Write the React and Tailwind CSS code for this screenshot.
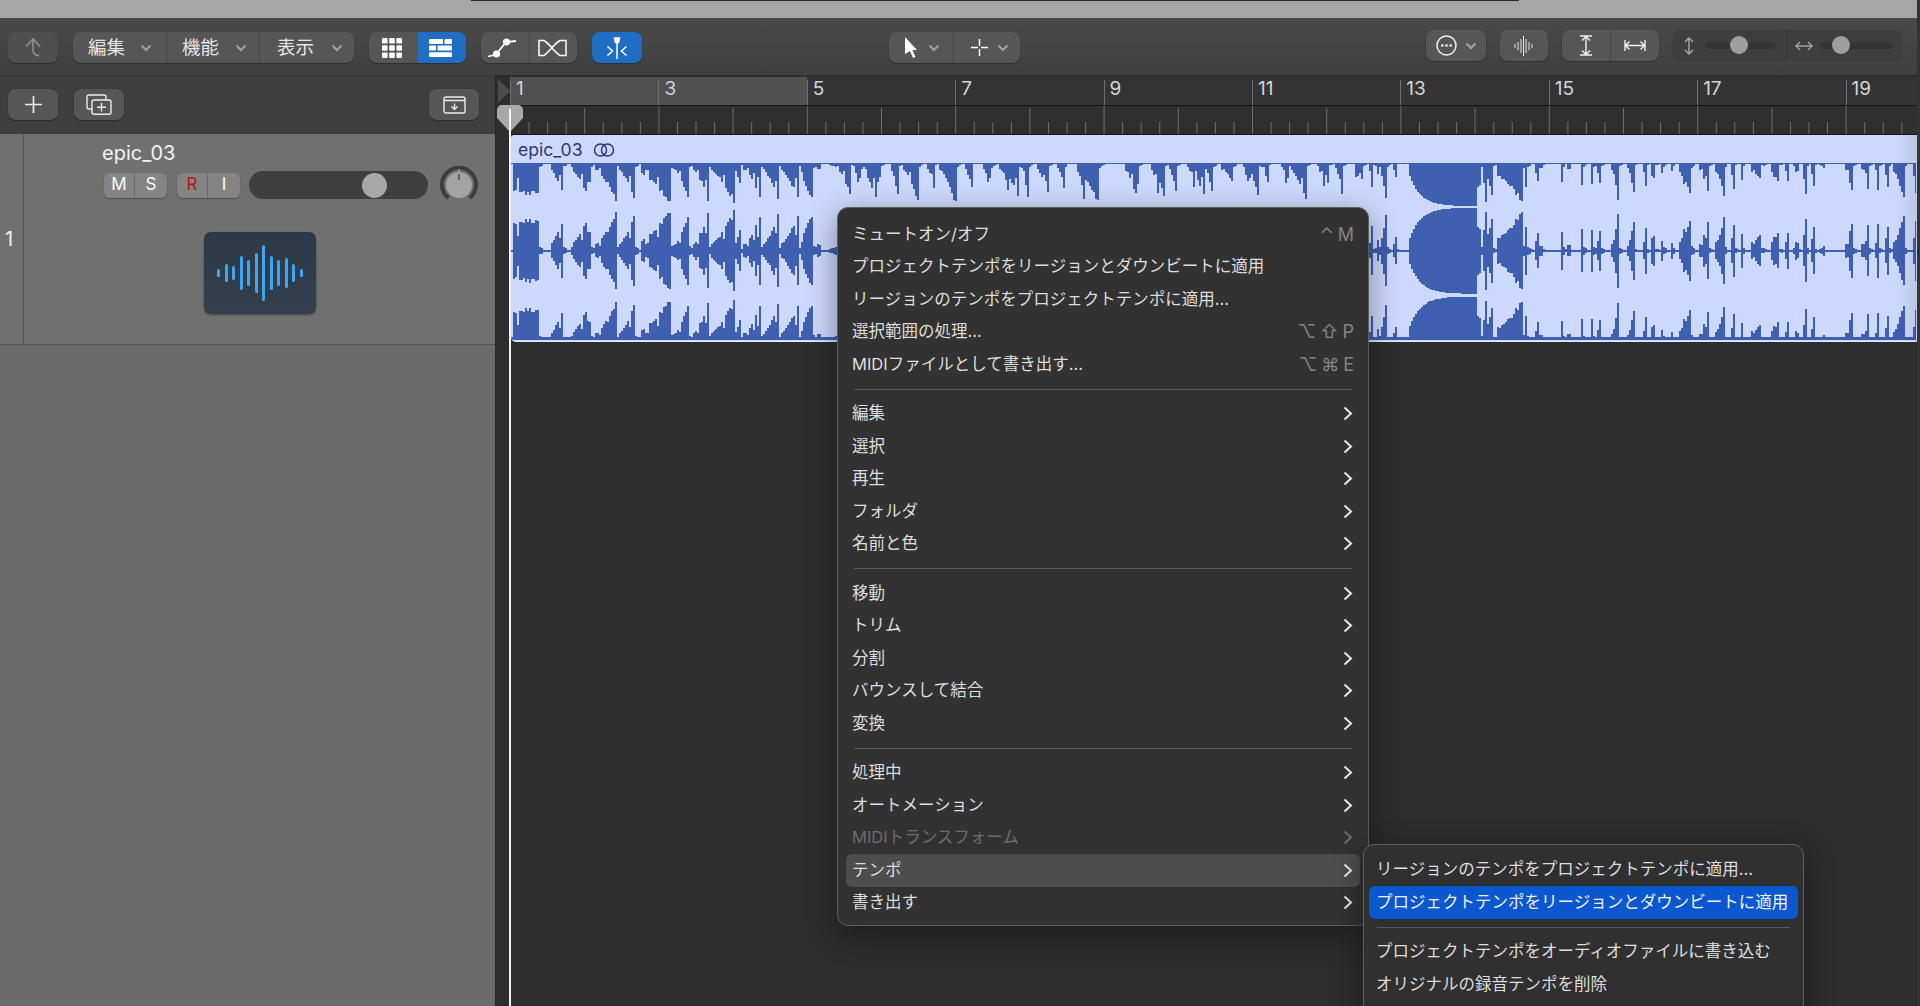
import React from "react";

let seed = 12345;
const rnd = () => {
  seed = (seed * 1103515245 + 12345) & 0x7fffffff;
  return seed / 0x7fffffff;
};

const hits = [
  [538, 32, 26, 0.9], [562, 30, 12, 0.4], [589, 36, 18, 0.35], [615, 36, 20, 0.3], [634, 36, 16, 0.3],
  [670, 40, 30, 0.45], [688, 38, 15, 0.25], [707, 35, 15, 0.3], [733, 38, 23, 0.3], [739, 20, 4, 0.7],
  [760, 35, 17, 0.3], [777, 35, 15, 0.3], [797, 35, 17, 0.3], [812, 40, 12, 0.6], [820, 12, 8, 0.1], [836, 5, 10, 0.3],
  [849, 33, 12, 0.3], [875, 35, 14, 0.3], [917, 38, 14, 0.3], [955, 40, 16, 0.3], [1018, 33, 20, 0.3], [1047, 30, 10, 0.4],
  [1098, 40, 22, 0.3], [1135, 32, 10, 0.4], [1163, 33, 12, 0.3], [1203, 33, 14, 0.3], [1232, 36, 12, 0.3], [1257, 30, 10, 0.3], [1304, 36, 14, 0.3],
  [1328, 28, 3, 0.7], [1341, 30, 4, 0.6], [1358, 33, 4, 0.6], [1372, 32, 3, 0.8], [1378, 32, 2, 0.8], [1385, 33, 5, 0.6], [1395, 15, 2, 0.8],
  [1479, 40, 3, 0.8], [1485, 40, 2, 0.8], [1492, 38, 5, 0.8], [1522, 40, 26, 0.5], [1526, 35, 2, 0.8],
  [1537, 20, 2, 0.8], [1542, 12, 3, 0.7], [1562, 30, 2, 0.6], [1570, 13, 4, 0.6], [1582, 32, 2, 0.7], [1592, 33, 2, 0.7], [1600, 25, 4, 0.5],
  [1617, 35, 6, 0.3], [1633, 30, 6, 0.3],
  [1645, 22, 2, 0.7], [1653, 28, 3, 0.6], [1662, 28, 2, 0.7], [1672, 24, 2, 0.8], [1683, 22, 5, 0.5], [1690, 38, 9, 0.4], [1707, 30, 8, 0.4],
  [1723, 33, 8, 0.4], [1733, 25, 2, 0.8], [1742, 27, 2, 0.8], [1760, 35, 10, 0.4], [1777, 33, 6, 0.5], [1787, 18, 2, 0.8], [1797, 14, 5, 0.6],
  [1805, 30, 2, 0.8], [1813, 22, 2, 0.8], [1823, 5, 5, 0.5], [1851, 30, 6, 0.4], [1867, 28, 6, 0.4], [1877, 28, 2, 0.8], [1887, 27, 2, 0.8], [1903, 35, 10, 0.4], [1915, 28, 2, 0.8],
];
for (let x = 860; x < 1366; x += 18.55) {
  if (x > 1100 && x < 1122) continue;
  hits.push([Math.round(x), 24 + rnd() * 13, 7, 0.3]);
}

const ampAt = (x) => {
  if (x >= 1408 && x < 1477) return 43 * (1 - Math.exp(-(x - 1405) / 11));
  let a = 0;
  for (const [end, peak, w, f] of hits) {
    if (x >= end - w && x <= end) {
      const t = Math.pow((x - (end - w)) / w, 1.4);
      const base = f >= 0.9 ? f : f * 0.6;
      a = Math.max(a, peak * (base + (1 - base) * t));
    } else if (x > end && x < end + 7) {
      a = Math.max(a, peak * 0.14 * (1 - (x - end) / 7));
    }
  }
  return a;
};

let wavePath = "";
for (let x = 511; x < 1916; x += 2) {
  const raw = ampAt(x);
  const solid = x >= 1408 && x < 1477;
  const dip = rnd() < 0.2 ? 0.55 : 1;
  const a = Math.max(1, solid ? raw : Math.min(42, raw * 1.08 * (0.82 + rnd() * 0.18) * dip));
  const px = x - 511;
  wavePath += `M${px} 0h2v${a.toFixed(1)}h-2z`;
  wavePath += `M${px} ${(87.7 - a).toFixed(1)}h2v${(2 * a).toFixed(1)}h-2z`;
  const b = Math.max(3, solid ? a + 0.5 : a);
  wavePath += `M${px} ${(177 - b).toFixed(1)}h2v${b.toFixed(1)}h-2z`;
}

let tickPath = "";
for (let i = 0; i <= 76; i++) {
  const x = i * 18.55 + 0.5;
  const kind = i % 8 === 0 ? 0 : i % 4 === 0 ? 1 : 2;
  const top = kind === 0 ? 0 : kind === 1 ? 2 : 16;
  tickPath += `M${x.toFixed(1)} ${top}V28`;
}

const Chev = ({ c = "#a3a3a3" }) => (
  <svg width="12" height="8" viewBox="0 0 12 8" fill="none" stroke={c} strokeWidth="2"><path d="M1.5 1.5 6 6l4.5-4.5" /></svg>
);
const Arrow = ({ c = "#e6e6e6" }) => (
  <svg width="10" height="15" viewBox="0 0 10 15" fill="none" stroke={c} strokeWidth="2"><path d="M1.5 1.5 8 7.5l-6.5 6" /></svg>
);
const btn = "flex items-center justify-center rounded-[8px] shadow-[0_1px_1px_rgba(0,0,0,0.3)]";

const MenuText = ["ミュートオン/オフ", "プロジェクトテンポをリージョンとダウンビートに適用", "リージョンのテンポをプロジェクトテンポに適用...", "選択範囲の処理...", "MIDIファイルとして書き出す..."];

function Row({ label, keys, sub, dim, hl }) {
  return (
    <div className={`relative flex h-[32.5px] items-center justify-between pl-[14px] pr-[14px] ${dim ? "text-[#6b6b6b]" : "text-[#dedede]"}`}>
      {hl && <div className="absolute inset-x-[8px] inset-y-0 rounded-[6px] bg-[#4d4d4d]" />}
      <span className="relative whitespace-nowrap">{label}</span>
      {keys && (
        <span className="relative flex gap-[4px] text-[18px] text-[#858585]">
          {keys.map((k) => <span key={k}>{k}</span>)}
        </span>
      )}
      {sub && <span className="relative mr-[1px]"><Arrow c={dim ? "#6b6b6b" : "#e6e6e6"} /></span>}
    </div>
  );
}
const Sep = () => <div className="mx-[16px] my-[8px] h-px bg-[#5b5b5b]" />;

export default function App() {
  return (
    <div className="relative flex h-[1006px] w-[1920px] flex-col overflow-hidden bg-[#2d2d2d] text-[16.5px] [font-family:Inter,'Noto_Sans_CJK_JP','DejaVu_Sans',sans-serif]">
      <div className="h-[18px] shrink-0 bg-[#a6a6a6]"><div className="ml-[471px] h-px w-[1048px] bg-[#2a2a2a]" /></div>

      {/* toolbar */}
      <div className="flex h-[57px] shrink-0 items-start bg-gradient-to-b from-[#494949] to-[#404040] pl-[8px] pt-[14px] text-[18.4px] text-[#e6e6e6]">
        <div className={`${btn} h-[31px] w-[50px] bg-[#4f4f4f]`}>
          <svg width="16" height="19" viewBox="0 0 16 19" fill="none" stroke="#8c8c8c" strokeWidth="1.7"><path d="M1 8.5 8 1l7 7.5M8 1v11q0 5.5 6 5.5" /></svg>
        </div>
        <div className={`${btn} ml-[15px] h-[31px] w-[281px] divide-x divide-[#454545] bg-[#565656]`}>
          <div className="flex h-full w-[94px] items-center gap-[15px] pl-[15px]"><span>編集</span><Chev /></div>
          <div className="flex h-full w-[93px] items-center gap-[16px] pl-[15px]"><span>機能</span><Chev /></div>
          <div className="flex h-full w-[94px] items-center gap-[17px] pl-[17px]"><span>表示</span><Chev /></div>
        </div>
        <div className={`${btn} ml-[15px] h-[31px] w-[97px] overflow-hidden bg-[#565656]`}>
          <div className="flex h-full w-[49px] items-center justify-center pr-[3px]">
            <svg width="20" height="20" viewBox="0 0 20 20" fill="#fff">
              {[0, 7.2, 14.4].flatMap((y) => [0, 7.2, 14.4].map((x) => <rect key={`${x}${y}`} x={x} y={y} width="5.6" height="5.6" rx="1.2" />))}
            </svg>
          </div>
          <div className="flex h-full flex-1 items-center justify-center bg-[#1f6ec4] pr-[3px]">
            <svg width="23" height="18" viewBox="0 0 23 18" fill="#fff">
              <rect x="0" y="0" width="14" height="5" rx="1" /><rect x="15.5" y="0" width="7.5" height="5" rx="1" />
              <rect x="0" y="6.6" width="7" height="5" rx="1" /><rect x="8.5" y="6.6" width="14.5" height="5" rx="1" />
              <rect x="0" y="13.2" width="23" height="4.8" rx="1" />
            </svg>
          </div>
        </div>
        <div className={`${btn} ml-[15px] h-[31px] w-[96px] divide-x divide-[#454545] bg-[#565656]`}>
          <div className="flex h-full w-[48.5px] items-center justify-center pr-[6px]">
            <svg width="30" height="22" viewBox="0 0 30 22" fill="none" stroke="#fff" strokeWidth="1.8">
              <path d="M1 19.5 9 17.5 19 5 29 4" /><circle cx="9.5" cy="17" r="3.6" fill="#fff" stroke="none" /><circle cx="19.5" cy="5" r="3.6" fill="#fff" stroke="none" />
            </svg>
          </div>
          <div className="flex h-full flex-1 items-center justify-center pr-[2px]">
            <svg width="29" height="18" viewBox="0 0 29 18" fill="none" stroke="#fff" strokeWidth="1.5"><path d="M1 1.5V16.5H6C12 12 16 5 22 1.5H28V16.5H22C16 13 12 5 6 1.5Z" /></svg>
          </div>
        </div>
        <div className={`${btn} ml-[15px] h-[31px] w-[50px] bg-[#1f6ec4]`}>
          <svg width="22" height="22" viewBox="0 0 22 22" fill="none" stroke="#fff" strokeWidth="1.5">
            <path d="M8.5 1h5l-1 4.5h-3z" fill="#fff" /><path d="M11 4v18M1.5 9.5 6.5 14l-5 4.5M20.5 9.5 15.5 14l5 4.5" />
          </svg>
        </div>
        <div className={`${btn} ml-[247px] h-[31px] w-[131px] divide-x divide-[#454545] bg-[#565656]`}>
          <div className="flex h-full w-[65px] items-center gap-[11px] pl-[16px]">
            <svg width="12" height="21" viewBox="0 0 12 21" fill="#fff"><path d="M0 0 12 13H7.5l3 7-2.5 1-3-7L0 17Z" /></svg>
            <Chev />
          </div>
          <div className="flex h-full flex-1 items-center gap-[9px] pl-[17px]">
            <svg width="17" height="17" viewBox="0 0 17 17" fill="none" stroke="#fff" strokeWidth="1.4"><path d="M8.5 0v7M8.5 10v7M0 8.5h7M10 8.5h7" /></svg>
            <Chev />
          </div>
        </div>
        <div className={`${btn} ml-[406px] -mt-[2px] h-[31px] w-[60px] justify-start gap-[8px] bg-[#565656] pl-[10px]`}>
          <svg width="21" height="21" viewBox="0 0 21 21" fill="none" stroke="#f0f0f0" strokeWidth="1.5">
            <circle cx="10.5" cy="10.5" r="9.5" /><g fill="#f0f0f0" stroke="none"><circle cx="6.3" cy="10.5" r="1.3" /><circle cx="10.5" cy="10.5" r="1.3" /><circle cx="14.7" cy="10.5" r="1.3" /></g>
          </svg>
          <Chev />
        </div>
        <div className={`${btn} ml-[14px] -mt-[2px] h-[31px] w-[48px] bg-[#565656] pr-[2px]`}>
          <svg width="19" height="20" viewBox="0 0 19 20" fill="none" stroke="#e6e6e6" strokeWidth="1">
            <path d="M1 8v4M4 6v8M7 3v14M9.5 0v20M12 3v14M15 6v8M18 8v4" />
          </svg>
        </div>
        <div className={`${btn} ml-[14px] -mt-[2px] h-[31px] w-[97px] divide-x divide-[#454545] bg-[#565656]`}>
          <div className="flex h-full w-[49px] items-center justify-center">
            <svg width="14" height="21" viewBox="0 0 14 21" fill="none" stroke="#f0f0f0" strokeWidth="1.4">
              <path d="M1 1h12M1 20h12M7 1v19M3 5.5 7 1.5l4 4M3 15.5 7 19.5l4-4" />
            </svg>
          </div>
          <div className="flex h-full flex-1 items-center justify-center">
            <svg width="22" height="11" viewBox="0 0 22 11" fill="none" stroke="#f0f0f0" strokeWidth="1.4">
              <path d="M1 0v11M21 0v11M1 5.5h20M5.5 1.5l-4 4 4 4M16.5 1.5l4 4-4 4" />
            </svg>
          </div>
        </div>
        <div className="ml-[13px] -mt-[2px] flex h-[31px] w-[231px] items-center divide-x divide-[#333] rounded-[8px] bg-[#3e3e3e]">
          <div className="flex h-full w-[115px] items-center pl-[11px]">
            <svg width="12" height="18" viewBox="0 0 12 18" fill="none" stroke="#a3a3a3" strokeWidth="1.5"><path d="M6 1v16M2 5l4-4 4 4M2 13l4 4 4-4" /></svg>
            <div className="relative ml-[11px] h-[7px] w-[70px] rounded-full bg-[#353535]">
              <div className="absolute left-[24px] top-[-6px] h-[18px] w-[18px] rounded-full bg-[#9e9e9e]" />
            </div>
          </div>
          <div className="flex h-full flex-1 items-center pl-[8px]">
            <svg width="18" height="12" viewBox="0 0 18 12" fill="none" stroke="#a3a3a3" strokeWidth="1.5"><path d="M1 6h16M5 2 1 6l4 4M13 2l4 4-4 4" /></svg>
            <div className="relative ml-[7px] h-[7px] w-[73px] rounded-full bg-[#353535]">
              <div className="absolute left-[12px] top-[-6px] h-[18px] w-[18px] rounded-full bg-[#9e9e9e]" />
            </div>
          </div>
        </div>
      </div>

      <div className="flex min-h-0 flex-1">
        {/* left column */}
        <div className="flex w-[495px] shrink-0 flex-col bg-[#6b6b6b]">
          <div className="flex h-[59px] shrink-0 items-start border-t border-[#373737] bg-[#3e3e3e] px-[8px] pt-[13px]">
            <div className={`${btn} h-[31px] w-[50px] bg-[#565656]`}>
              <svg width="17" height="17" viewBox="0 0 17 17" fill="none" stroke="#ececec" strokeWidth="1.7"><path d="M8.5 0v17M0 8.5h17" /></svg>
            </div>
            <div className={`${btn} ml-[16px] h-[31px] w-[50px] bg-[#565656]`}>
              <svg width="26" height="21" viewBox="0 0 26 21" fill="none" stroke="#ececec" strokeWidth="1.4">
                <path d="M6 15H3a2 2 0 0 1-2-2V3a2 2 0 0 1 2-2h15a2 2 0 0 1 2 2v3" />
                <rect x="6" y="6" width="19" height="14.3" rx="2" /><path d="M15.5 9v8.5M11 13.2h9" />
              </svg>
            </div>
            <div className={`${btn} ml-auto mr-[8px] h-[31px] w-[50px] bg-[#565656]`}>
              <svg width="23" height="18" viewBox="0 0 23 18" fill="none" stroke="#ececec" strokeWidth="1.4">
                <rect x="1" y="1" width="21" height="16" rx="2" /><path d="M1 4.5h21M11.5 7.5v6M8.5 10.5l3 3 3-3" />
              </svg>
            </div>
          </div>
          <div className="flex h-[211px] shrink-0 border-b border-[#555] bg-[#707070]">
            <div className="flex w-[24px] shrink-0 items-center border-r border-[#555] pl-[5px] text-[20px] text-[#f0f0f0]">1</div>
            <div className="flex flex-1 flex-col">
              <div className="ml-[78px] mt-[4px] flex h-[30px] items-center text-[20px] leading-none text-[#f2f2f2]">epic_03</div>
              <div className="ml-[80px] mt-[3px] flex h-[28px] items-center">
                <div className="flex h-[25px] w-[63px] divide-x divide-[#6c6c6c] rounded-[6px] bg-[#848484] text-[17px] text-[#fafafa] shadow-[0_1px_1px_rgba(0,0,0,0.3)]">
                  <div className="flex w-[31px] items-center justify-center">M</div>
                  <div className="flex flex-1 items-center justify-center">S</div>
                </div>
                <div className="ml-[10px] flex h-[25px] w-[63px] divide-x divide-[#6c6c6c] rounded-[6px] bg-[#848484] text-[17px] text-[#fafafa] shadow-[0_1px_1px_rgba(0,0,0,0.3)]">
                  <div className="flex w-[31px] items-center justify-center text-[#b31414]">R</div>
                  <div className="flex flex-1 items-center justify-center">I</div>
                </div>
                <div className="relative ml-[9px] h-[28px] w-[179px] shrink-0 rounded-full bg-[#3f3f3f]">
                  <div className="absolute left-[113px] top-[1.5px] h-[25px] w-[25px] rounded-full bg-[#a8a8a8]" />
                </div>
                <svg className="ml-[11px] shrink-0" width="40" height="40" viewBox="0 0 40 40" fill="none">
                  <path d="M9.5 33a17 17 0 1 1 21 0" stroke="#3c3c3c" strokeWidth="4" />
                  <circle cx="20" cy="20" r="13" fill="#a3a3a3" />
                  <path d="M20 4v5" stroke="#4ade80" strokeWidth="1.2" /><path d="M20 9v6" stroke="#333" strokeWidth="1.2" />
                </svg>
              </div>
              <div className="ml-[180px] mt-[33px] flex h-[82px] w-[112px] items-center justify-center gap-[4.5px] rounded-[7px] bg-gradient-to-b from-[#2c3947] to-[#333f4d] shadow-[0_1px_2px_rgba(0,0,0,0.4)]">
                {[8, 18, 14, 34, 26, 40, 56, 34, 26, 30, 18, 8].map((h, i) => (
                  <div key={i} className="w-[3px] rounded-full bg-[#3ea6f0]" style={{ height: h }} />
                ))}
              </div>
            </div>
          </div>
        </div>

        {/* arrange */}
        <div className="relative min-w-0 flex-1 border-l border-[#262626] pl-[14px]">
          <div className="flex h-[60px] flex-col bg-[#2f2f2f]">
            <div className="mt-[2px] flex h-[28px] shrink-0 bg-[#343434] text-[19px] leading-none text-[#d4d4d4]">
              {[1, 3, 5, 7, 9, 11, 13, 15, 17, 19].map((n) => (
                <div key={n} className={`h-full w-[148.4px] shrink-0 pt-[3px] ${n < 5 ? "bg-[#515151]" : ""}`}>
                  <div className="flex h-[25px] items-start border-l border-[#6f6f6f] pl-[5px]"><span className="-mt-[1px]">{n}</span></div>
                </div>
              ))}
            </div>
            <div className="h-[30px] shrink-0 border-b border-t border-[#161616]">
              <svg className="block" width="1411" height="28" viewBox="0 0 1411 28" fill="none" stroke="#6f6f6f" strokeWidth="1">
                <path d={tickPath} />
              </svg>
            </div>
          </div>

          <div className="relative ml-[1px] h-[207px] overflow-hidden rounded-b-[5px] rounded-tl-[3px] border-b border-[#e6ecff] bg-[#cdd9fc]">
            <div className="flex h-[28px] items-center gap-[10px] pl-[7px] pt-[2px] text-[17.6px] text-[#2b3970]">
              <span>epic_03</span>
              <svg width="22" height="14" viewBox="0 0 22 14" fill="none" stroke="#2b3970" strokeWidth="1.5"><circle cx="7.5" cy="7" r="6" /><circle cx="14.5" cy="7" r="6" /></svg>
            </div>
            <svg className="blur-[0.4px]" width="1405" height="178" viewBox="0 0 1405 178" shapeRendering="crispEdges" fill="#3f5fb0"><path d={wavePath} /></svg>
            <div className="absolute bottom-0 right-0 top-0 w-[24px] bg-gradient-to-r from-transparent to-[#00000018]" />
          </div>

          {/* locator & playhead overlay */}
          <svg className="absolute left-[2px] top-[2px]" width="12" height="28" viewBox="0 0 12 28" fill="#4c4c4c"><path d="M0 2 12 14 0 26Z" /></svg>
          <svg className="absolute left-[1px] top-[30px]" width="26" height="27" viewBox="0 0 26 27" fill="#a9a9a9"><path d="M0 5a5 5 0 0 1 5-5h16a5 5 0 0 1 5 5v8L13 27 0 13Z" /></svg>
          <div className="absolute bottom-0 left-[13px] top-[34px] w-[1.5px] bg-[#f4f4f4]" />
        </div>
      </div>

      {/* right window edge */}
      <div className="absolute bottom-0 right-0 top-0 w-[3px] bg-[#333]" />

      {/* context menu */}
      <div className="absolute left-[837px] top-[207px] w-[532px] rounded-[11px] border border-[#5e5e5e] bg-[#323232] pb-[6px] pt-[10px] shadow-[0_8px_30px_rgba(0,0,0,0.4)]">
        <Row label={MenuText[0]} keys={["⌃", "M"]} />
        <Row label={MenuText[1]} />
        <Row label={MenuText[2]} />
        <Row label={MenuText[3]} keys={["⌥", "⇧", "P"]} />
        <Row label={MenuText[4]} keys={["⌥", "⌘", "E"]} />
        <Sep />
        {["編集", "選択", "再生", "フォルダ", "名前と色"].map((t) => <Row key={t} label={t} sub />)}
        <Sep />
        {["移動", "トリム", "分割", "バウンスして結合", "変換"].map((t) => <Row key={t} label={t} sub />)}
        <Sep />
        <Row label="処理中" sub />
        <Row label="オートメーション" sub />
        <Row label="MIDIトランスフォーム" sub dim />
        <Row label="テンポ" sub hl />
        <Row label="書き出す" sub />
      </div>

      {/* submenu */}
      <div className="absolute left-[1363px] top-[844px] h-[200px] w-[441px] rounded-[11px] border border-[#5e5e5e] bg-[#303030] pt-[8px] shadow-[0_8px_30px_rgba(0,0,0,0.4)]">
        <div className="flex h-[32.5px] items-center pl-[12px] text-[#dedede]">リージョンのテンポをプロジェクトテンポに適用...</div>
        <div className="mx-[5px] flex h-[33px] items-center rounded-[6px] bg-[#0a57d0] pl-[7px] text-[#f2f2f2]">プロジェクトテンポをリージョンとダウンビートに適用</div>
        <div className="mx-[13px] my-[8px] h-px bg-[#5b5b5b]" />
        <div className="flex h-[32.5px] items-center pl-[12px] text-[#dedede]">プロジェクトテンポをオーディオファイルに書き込む</div>
        <div className="flex h-[32.5px] items-center pl-[12px] text-[#dedede]">オリジナルの録音テンポを削除</div>
      </div>
    </div>
  );
}
